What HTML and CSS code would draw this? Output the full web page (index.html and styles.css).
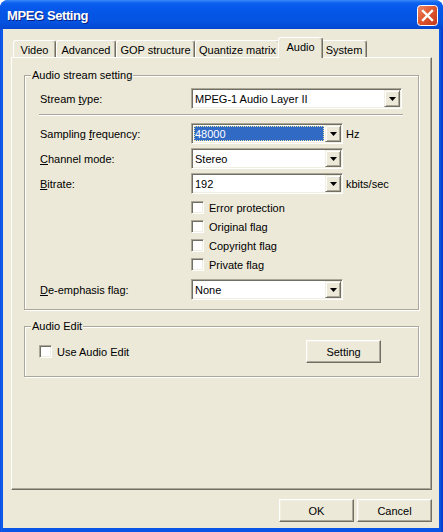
FILE: index.html
```html
<!DOCTYPE html>
<html>
<head>
<meta charset="utf-8">
<title>MPEG Setting</title>
<link rel="stylesheet" href="styles.css">
</head>
<body>
<div class="window">
  <div class="titlebar">
    <span class="title">MPEG Setting</span>
    <div class="close">
      <svg width="21" height="21" viewBox="0 0 21 21">
        <defs>
          <linearGradient id="cg" x1="0" y1="0" x2="1" y2="1">
            <stop offset="0" stop-color="#F08A6C"/>
            <stop offset="0.45" stop-color="#E0582F"/>
            <stop offset="1" stop-color="#C2381A"/>
          </linearGradient>
        </defs>
        <rect x="0.5" y="0.5" width="20" height="20" rx="3" ry="3" fill="url(#cg)" stroke="#fff" stroke-width="1"/>
        <path d="M6 6 L15 15 M15 6 L6 15" stroke="#fff" stroke-width="2.4" stroke-linecap="square"/>
      </svg>
    </div>
  </div>
  <div class="client">
    <div class="tabs">
      <div class="tab t-video">Video</div>
      <div class="tab t-adv">Advanced</div>
      <div class="tab t-gop">GOP structure</div>
      <div class="tab t-quant">Quantize matrix</div>
      <div class="tab t-audio active">Audio</div>
      <div class="tab t-sys">System</div>
    </div>
    <div class="panel">
      <div class="group g-stream">
        <span class="legend">Audio stream setting</span>
        <div class="row first">
          <span class="lbl">Stream <u>t</u>ype:</span>
          <div class="combo wide"><span class="val">MPEG-1 Audio Layer II</span><span class="drop"><svg width="7" height="4" viewBox="0 0 7 4"><path d="M0 0H7L3.5 4Z" fill="#000"/></svg></span></div>
        </div>
        <div class="sep"></div>
        <div class="row r-samp">
          <span class="lbl">Sampling <u>f</u>requency:</span>
          <div class="combo"><span class="val sel">48000</span><span class="drop"><svg width="7" height="4" viewBox="0 0 7 4"><path d="M0 0H7L3.5 4Z" fill="#000"/></svg></span></div>
          <span class="unit">Hz</span>
        </div>
        <div class="row r-next">
          <span class="lbl"><u>C</u>hannel mode:</span>
          <div class="combo"><span class="val">Stereo</span><span class="drop"><svg width="7" height="4" viewBox="0 0 7 4"><path d="M0 0H7L3.5 4Z" fill="#000"/></svg></span></div>
        </div>
        <div class="row r-next">
          <span class="lbl"><u>B</u>itrate:</span>
          <div class="combo"><span class="val">192</span><span class="drop"><svg width="7" height="4" viewBox="0 0 7 4"><path d="M0 0H7L3.5 4Z" fill="#000"/></svg></span></div>
          <span class="unit">kbits/sec</span>
        </div>
        <div class="checks">
          <div class="check-row"><span class="cb"></span><span>Error protection</span></div>
          <div class="check-row"><span class="cb"></span><span>Original flag</span></div>
          <div class="check-row"><span class="cb"></span><span>Copyright flag</span></div>
          <div class="check-row"><span class="cb"></span><span>Private flag</span></div>
        </div>
        <div class="row r-de">
          <span class="lbl"><u>D</u>e-emphasis flag:</span>
          <div class="combo"><span class="val">None</span><span class="drop"><svg width="7" height="4" viewBox="0 0 7 4"><path d="M0 0H7L3.5 4Z" fill="#000"/></svg></span></div>
        </div>
      </div>
      <div class="group g-edit">
        <span class="legend">Audio Edit</span>
        <div class="edit-row">
          <span class="cb"></span>
          <span class="edit-lbl">Use Audio Edit</span>
          <div class="btn setting">Setting</div>
        </div>
      </div>
    </div>
    <div class="buttons">
      <div class="btn">OK</div>
      <div class="btn">Cancel</div>
    </div>
  </div>
</div>
</body>
</html>
```

FILE: styles.css
```css
* { box-sizing: border-box; }
html, body { margin: 0; padding: 0; }
body {
  width: 443px;
  height: 532px;
  overflow: hidden;
  background: #fff;
  font-family: "Liberation Sans", Arial, sans-serif;
  font-size: 11px;
  color: #000;
}
.window {
  width: 443px;
  height: 532px;
  border-radius: 8px 8px 0 0;
  overflow: hidden;
  display: flex;
  flex-direction: column;
  background: linear-gradient(to right, #0831D9 0, #166AEE 1px, #0855E6 2px, #0855E6 440px, #0544C8 442px, #0831D9 443px);
}
.titlebar {
  height: 29px;
  flex: none;
  display: flex;
  justify-content: space-between;
  align-items: flex-start;
  padding: 0 5px 0 7px;
  background: linear-gradient(to bottom, #3D8DF9 0, #2A7BF6 1px, #0C61EE 3px, #0659EC 7px, #0556E6 14px, #0553E0 22px, #044CD8 26px, #0447D0 29px);
}
.title {
  color: #fff;
  font-weight: bold;
  font-size: 13px;
  letter-spacing: -0.4px;
  line-height: 14px;
  margin-top: 9px;
  text-shadow: 1px 1px 0 #0A1E80;
}
.close {
  width: 21px;
  height: 21px;
  margin-top: 5px;
}
.close svg { display: block; }
.client {
  flex: 1;
  margin: 0 4px 4px 3px;
  background: #ECE9D8;
  padding-top: 8px;
  display: flex;
  flex-direction: column;
}
.tabs {
  height: 20px;
  display: flex;
  align-items: flex-end;
  padding-left: 10px;
  position: relative;
  z-index: 2;
}
.tab {
  height: 17px;
  background: #ECE9D8;
  border-top: 1px solid #fff;
  border-left: 1px solid #fff;
  border-right: 1px solid #716F64;
  box-shadow: inset -1px 0 0 #ACA899;
  border-radius: 3px 3px 0 0;
  display: flex;
  align-items: center;
  justify-content: center;
  padding-top: 1px;
}
.t-video { width: 43px; }
.t-adv { width: 60px; }
.t-gop { width: 79px; }
.t-quant { width: 85px; }
.t-audio { width: 45px; }
.t-sys { width: 46px; }
.tab.active {
  height: 21px;
  margin: 0 -2px -1px -2px;
  position: relative;
  z-index: 3;
  padding-top: 0;
  padding-bottom: 3px;
}
.panel {
  height: 433px;
  flex: none;
  margin: 0 7px 0 8px;
  border: 1px solid;
  border-color: #fff #716F64 #716F64 #fff;
  box-shadow: inset -1px -1px 0 #ACA899;
  padding: 17px 0 0 12px;
  position: relative;
  z-index: 1;
}
.group {
  position: relative;
  width: 395px;
  border: 1px solid #ACA899;
  box-shadow: 1px 1px 0 #fff, inset 1px 1px 0 #fff;
}
.legend {
  position: absolute;
  left: 6px;
  top: -7px;
  padding: 0 1px;
  line-height: 13px;
  background: #ECE9D8;
}
.g-stream {
  height: 235px;
  padding-left: 15px;
}
.g-edit {
  height: 51px;
  margin-top: 16px;
}
.row {
  display: flex;
  align-items: center;
  height: 21px;
}
.row.first { margin-top: 12px; }
.r-samp { margin-top: 7px; }
.r-next { margin-top: 4px; }
.r-de { margin-top: 8px; }
.lbl { width: 151px; flex: none; }
u { text-underline-offset: 1px; }
.combo {
  width: 152px;
  height: 21px;
  flex: none;
  display: flex;
  align-items: stretch;
  background: #fff;
  border: 1px solid;
  border-color: #ACA899 #fff #fff #ACA899;
  box-shadow: inset 1px 1px 0 #716F64, inset -1px -1px 0 #F1EFE2;
  padding: 1px;
}
.combo.wide { width: 211px; }
.val {
  flex: 1;
  display: flex;
  align-items: center;
  padding-left: 2px;
  white-space: nowrap;
}
.val.sel {
  margin: 1px;
  padding-left: 0;
  background: #316AC5;
  color: #fff;
  border: 1px dotted #E8E3A0;
}
.drop {
  width: 16px;
  flex: none;
  display: flex;
  align-items: center;
  justify-content: center;
  background: #ECE9D8;
  border: 1px solid;
  border-color: #F1EFE2 #716F64 #716F64 #F1EFE2;
  box-shadow: inset 1px 1px 0 #fff, inset -1px -1px 0 #ACA899;
}
.drop svg { display: block; }
.unit { margin-left: 3px; }
.sep {
  width: 364px;
  height: 2px;
  margin: 5px 0 0 -1px;
  border-top: 1px solid #ACA899;
  border-bottom: 1px solid #fff;
}
.checks {
  margin: 7px 0 0 151px;
  display: flex;
  flex-direction: column;
  gap: 6px;
}
.check-row {
  height: 13px;
  display: flex;
  align-items: center;
  gap: 5px;
}
.cb {
  width: 13px;
  height: 13px;
  flex: none;
  background: #fff;
  border: 1px solid;
  border-color: #ACA899 #fff #fff #ACA899;
  box-shadow: inset 1px 1px 0 #716F64, inset -1px -1px 0 #F1EFE2;
}
.edit-row {
  margin-top: 13px;
  height: 23px;
  display: flex;
  align-items: center;
  padding-left: 14px;
}
.edit-lbl { margin-left: 5px; }
.btn {
  width: 75px;
  height: 23px;
  display: flex;
  align-items: center;
  justify-content: center;
  background: #ECE9D8;
  border: 1px solid;
  border-color: #fff #716F64 #716F64 #fff;
  box-shadow: inset -1px -1px 0 #ACA899, inset 1px 1px 0 #F1EFE2;
}
.btn.setting {
  margin-left: auto;
  margin-right: 37px;
}
.buttons {
  margin-top: 9px;
  display: flex;
  justify-content: flex-end;
  gap: 3px;
  padding-right: 7px;
}
```
